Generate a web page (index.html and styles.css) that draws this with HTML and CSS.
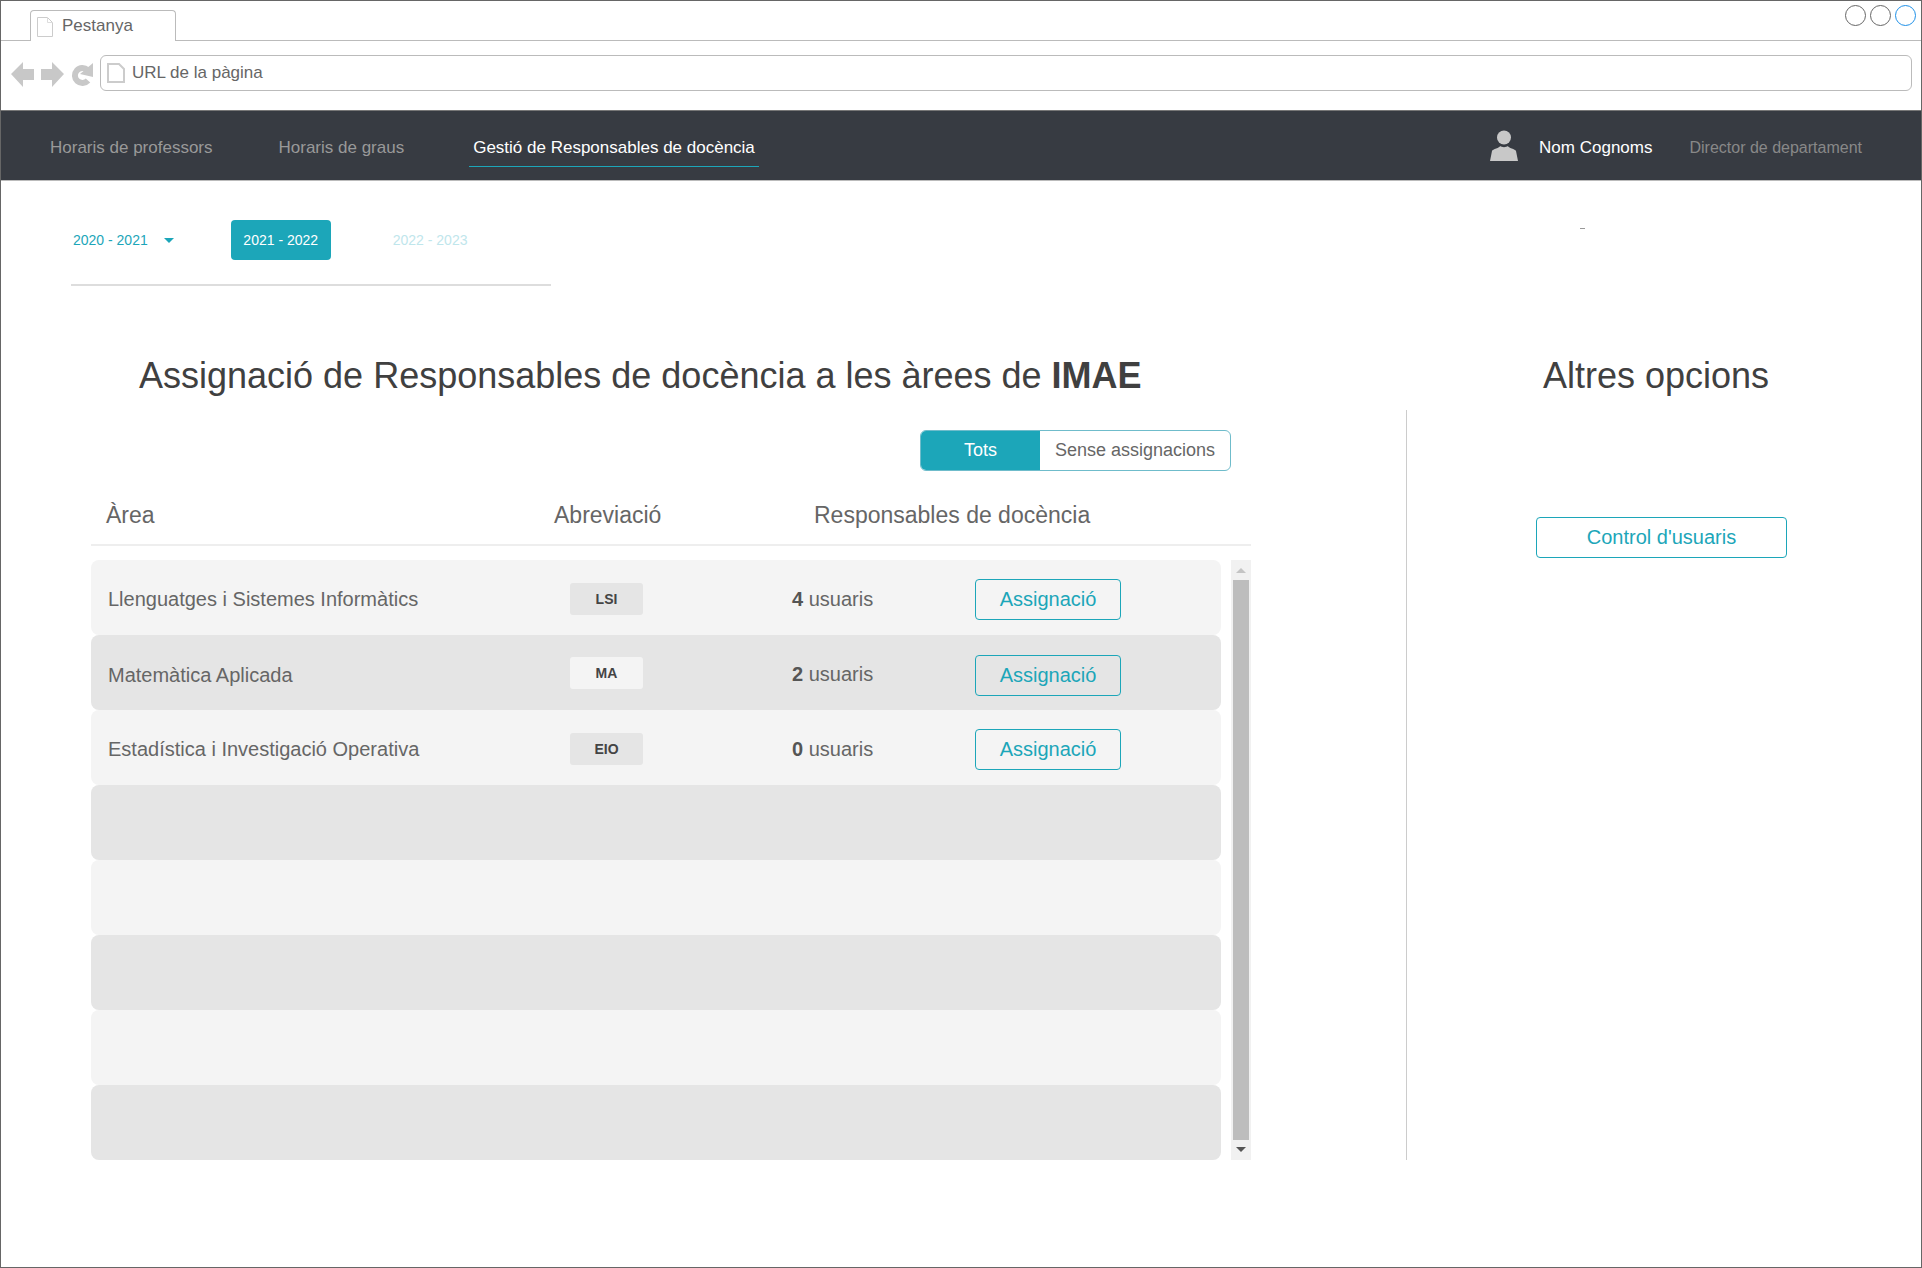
FILE: index.html
```html
<!DOCTYPE html>
<html lang="ca">

<head>
    <meta charset="UTF-8">
    <meta name="viewport" content="width=device-width, initial-scale=1.0">
    <title>Gestió de Responsables de docència</title>
    <link rel="stylesheet" href="styles.css">
</head>

<body>
    <div class="window">
        <div class="tabstrip">
            <div class="tab">
                <svg class="page-icon" width="16" height="20" viewBox="0 0 16 20">
                    <path d="M.5.5h10l5 5v14H.5z" fill="#fff" stroke="#ccc" />
                    <path d="M10.5.5v5h5" fill="none" stroke="#ddd" />
                </svg>
                <span>Pestanya</span>
            </div>
            <div class="win-controls">
                <span class="win-dot"></span>
                <span class="win-dot"></span>
                <span class="win-dot win-dot-blue"></span>
            </div>
        </div>

        <div class="toolbar">
            <svg class="nav-arrows" width="84" height="26" viewBox="0 0 84 26">
                <path d="M0 12 12 0v7h11v11H12v7z" fill="#c8c8c8" />
                <path d="M53 12 41 0v7H30v11h11v7z" fill="#c8c8c8" />
                <path d="M76.500 8A7.500 7.500 0 1 0 77 18.500" fill="none" stroke="#c8c8c8" stroke-width="6" />
                <path d="M82 1v14L69 12z" fill="#c8c8c8" />
            </svg>
            <div class="address">
                <svg class="page-icon-big" width="18" height="20" viewBox="0 0 18 20">
                    <path d="M1 1h11l5 5v13H1z" fill="#fff" stroke="#ccc" stroke-width="2" />
                </svg>
                <span>URL de la pàgina</span>
            </div>
        </div>

        <nav class="topnav">
            <a class="nav-link nav-first">Horaris de professors</a>
            <a class="nav-link nav-second">Horaris de graus</a>
            <a class="nav-link nav-active">Gestió de Responsables de docència</a>
            <div class="user">
                <svg class="user-icon" width="28" height="31" viewBox="0 0 28 31">
                    <circle cx="14" cy="7.500" r="7" fill="#c8c8c8" />
                    <path d="M0 31 2 21c.5-2 8-3 8-5 2 1.500 6 1.500 8 0 0 2 7.500 3 8 5l2 10z" fill="#c8c8c8" />
                </svg>
                <span class="user-name">Nom Cognoms</span>
                <span class="user-role">Director de departament</span>
            </div>
        </nav>

        <div class="content">
            <div class="main">
                <div class="years">
                    <span class="year year-past">2020 - 2021</span>
                    <span class="caret"></span>
                    <span class="year year-current">2021 - 2022</span>
                    <span class="year year-next">2022 - 2023</span>
                    <span class="dash"></span>
                </div>

                <div class="columns">
                    <section class="areas">
                        <h1>Assignació de Responsables de docència a les àrees de <b>IMAE</b></h1>

                        <div class="filter">
                            <span class="filter-btn filter-on">Tots</span>
                            <span class="filter-btn">Sense assignacions</span>
                        </div>

                        <div class="table-head">
                            <span class="th-area">Àrea</span>
                            <span class="th-abbr">Abreviació</span>
                            <span class="th-resp">Responsables de docència</span>
                        </div>

                        <div class="table-body">
                            <div class="rows">
                                <div class="row">
                                    <span class="area-name">Llenguatges i Sistemes Informàtics</span>
                                    <span class="badge">LSI</span>
                                    <span class="count"><b>4</b> usuaris</span>
                                    <a class="btn">Assignació</a>
                                </div>
                                <div class="row row-dark">
                                    <span class="area-name">Matemàtica Aplicada</span>
                                    <span class="badge">MA</span>
                                    <span class="count"><b>2</b> usuaris</span>
                                    <a class="btn">Assignació</a>
                                </div>
                                <div class="row">
                                    <span class="area-name">Estadística i Investigació Operativa</span>
                                    <span class="badge">EIO</span>
                                    <span class="count"><b>0</b> usuaris</span>
                                    <a class="btn">Assignació</a>
                                </div>
                                <div class="row row-dark"></div>
                                <div class="row"></div>
                                <div class="row row-dark"></div>
                                <div class="row"></div>
                                <div class="row row-dark"></div>
                            </div>
                            <div class="scrollbar">
                                <span class="arrow-up"></span>
                                <span class="thumb"></span>
                                <span class="arrow-down"></span>
                            </div>
                        </div>
                    </section>

                    <aside class="side">
                        <h2>Altres opcions</h2>
                        <div class="side-body">
                            <a class="btn btn-wide">Control d'usuaris</a>
                        </div>
                    </aside>
                </div>
            </div>
        </div>
    </div>
</body>

</html>
```

FILE: styles.css
```css
* {
    box-sizing: border-box;
}

body {
    margin: 0;
    font-family: "Liberation Sans", Arial, sans-serif;
    background-color: #fff;
    color: #666;
}

.window {
    width: 1922px;
    height: 1268px;
    border: 1px solid #666;
    overflow: hidden;
}

/* browser frame */
.tabstrip {
    height: 40px;
    padding: 9px 5px 0 29px;
    border-bottom: 1px solid #bbb;
    display: flex;
    justify-content: space-between;
}

.tab {
    width: 146px;
    height: 31px;
    padding: 6px 0 0 6px;
    background-color: #fff;
    border: 1px solid #bbb;
    border-bottom: none;
    border-radius: 4px 4px 0 0;
    display: flex;
    gap: 9px;
    font-size: 17px;
    line-height: 17px;
    color: #666;
}

.win-controls {
    display: flex;
    gap: 4px;
    margin-top: -5px;
}

.win-dot {
    width: 21px;
    height: 21px;
    border: 1.5px solid #666;
    border-radius: 50%;
}

.win-dot-blue {
    border-color: #1e90e8;
}

.toolbar {
    height: 69px;
    padding: 14px 9px 0 10px;
    display: flex;
    gap: 5px;
}

.nav-arrows {
    margin-top: 7px;
}

.address {
    flex: 1;
    height: 36px;
    border: 1px solid #bbb;
    border-radius: 6px;
    padding: 7px 0 0 6px;
    display: flex;
    gap: 7px;
    font-size: 17px;
    line-height: 20px;
}

/* top navigation */
.topnav {
    height: 71px;
    padding-top: 4px;
    background-color: #373b42;
    border-top: 1px solid #777;
    border-bottom: 1px solid #bbb;
    display: flex;
    align-items: center;
    font-size: 17px;
    color: #9a9a9a;
}

.nav-link {
    color: #999;
}

.nav-first {
    margin-left: 49px;
}

.nav-second {
    margin-left: 66px;
}

.nav-active {
    align-self: flex-start;
    margin: 13px 0 0 65px;
    padding: 0 4px;
    height: 39px;
    line-height: 40px;
    color: #fff;
    border-bottom: 1px solid #1ca6b9;
}

.user {
    margin-left: auto;
    margin-right: 59px;
    display: flex;
    align-items: center;
}

.user-icon {
    margin-top: -5px;
}

.user-name {
    margin-left: 21px;
    color: #fff;
}

.user-role {
    margin-left: 37px;
    font-size: 16px;
    color: #888;
}

/* academic year selector */
.years {
    height: 105px;
    margin-left: 70px;
    width: 480px;
    padding-top: 39px;
    border-bottom: 2px solid #ddd;
    display: flex;
    align-items: flex-start;
    font-size: 14px;
    position: relative;
}

.year {
    height: 40px;
    line-height: 40px;
}

.year-past {
    margin-left: 2px;
    color: #1ca6b9;
}

.caret {
    margin: 18px 0 0 16px;
    border-left: 5px solid transparent;
    border-right: 5px solid transparent;
    border-top: 5px solid #1ca6b9;
}

.year-current {
    width: 100px;
    margin-left: 57px;
    background-color: #1ca6b9;
    border-radius: 4px;
    text-align: center;
    color: #fff;
}

.year-next {
    margin-left: 62px;
    color: #bfe6ec;
}

.dash {
    position: absolute;
    left: 1509px;
    top: 47px;
    width: 5px;
    height: 1px;
    background-color: #999;
}

/* columns */
.columns {
    display: flex;
}

.areas {
    width: 1250px;
    margin-left: 90px;
    flex: none;
}

h1 {
    margin: 65px 0 0 48px;
    height: 50px;
    font-size: 36px;
    font-weight: normal;
    line-height: 50px;
    color: #404040;
    white-space: nowrap;
}

h1 b {
    font-weight: bold;
}

.filter {
    width: 311px;
    height: 41px;
    margin: 29px 0 0 829px;
    display: flex;
    border: 1px solid #6fbccb;
    border-radius: 6px;
    overflow: hidden;
    font-size: 18px;
    line-height: 38px;
}

.filter-btn {
    flex: 1;
    text-align: center;
}

.filter-on {
    flex: none;
    width: 119px;
    background-color: #1ca6b9;
    color: #fff;
}

.table-head {
    width: 1160px;
    height: 75px;
    border-bottom: 2px solid #eee;
    display: flex;
    font-size: 23px;
    line-height: 88px;
}

.th-area {
    margin-left: 15px;
    width: 448px;
}

.th-abbr {
    width: 260px;
}

.table-body {
    display: flex;
    width: 1160px;
    margin-top: 14px;
}

.rows {
    width: 1130px;
}

.row {
    height: 75px;
    padding-top: 3px;
    background-color: #f4f4f4;
    border-radius: 8px;
    display: flex;
    align-items: center;
    font-size: 20px;
}

.row-dark {
    background-color: #e5e5e5;
}

.area-name {
    width: 462px;
    margin-left: 17px;
}

.row-dark .area-name {
    margin-top: 2px;
}

.badge {
    width: 73px;
    height: 32px;
    background-color: #e5e5e5;
    border-radius: 3px;
    text-align: center;
    font-size: 14px;
    font-weight: bold;
    line-height: 32px;
    color: #444;
}

.row-dark .badge {
    margin-top: -2px;
    background-color: #f4f4f4;
}

.count {
    width: 183px;
    margin-left: 149px;
}

.count b {
    color: #555;
}

.btn {
    display: block;
    width: 146px;
    height: 41px;
    border: 1px solid #1ca6b9;
    border-radius: 4px;
    text-align: center;
    font-size: 20px;
    line-height: 39px;
    color: #1ca6b9;
}

.row-dark .btn {
    margin-top: 3px;
}

.btn-wide {
    width: 251px;
}

.scrollbar {
    width: 20px;
    margin-left: 10px;
    height: 600px;
    padding: 0 2px;
    background-color: #f1f1f1;
    display: flex;
    flex-direction: column;
    align-items: center;
}

.arrow-up {
    margin-top: 8px;
    border-left: 5px solid transparent;
    border-right: 5px solid transparent;
    border-bottom: 5px solid #c4c4c4;
}

.thumb {
    flex: none;
    width: 16px;
    height: 560px;
    margin-top: 7px;
    background-color: #bdbdbd;
}

.arrow-down {
    margin-top: 7px;
    border-left: 5px solid transparent;
    border-right: 5px solid transparent;
    border-top: 5px solid #555;
}

.side {
    flex: 1;
}

.side h2 {
    margin: 65px 0 0 115px;
    width: 400px;
    height: 50px;
    text-align: center;
    font-size: 36px;
    font-weight: normal;
    line-height: 50px;
    color: #404040;
}

.side-body {
    height: 750px;
    margin-top: 9px;
    margin-left: 65px;
    border-left: 1px solid #ccc;
    padding: 107px 0 0 129px;
}
```
